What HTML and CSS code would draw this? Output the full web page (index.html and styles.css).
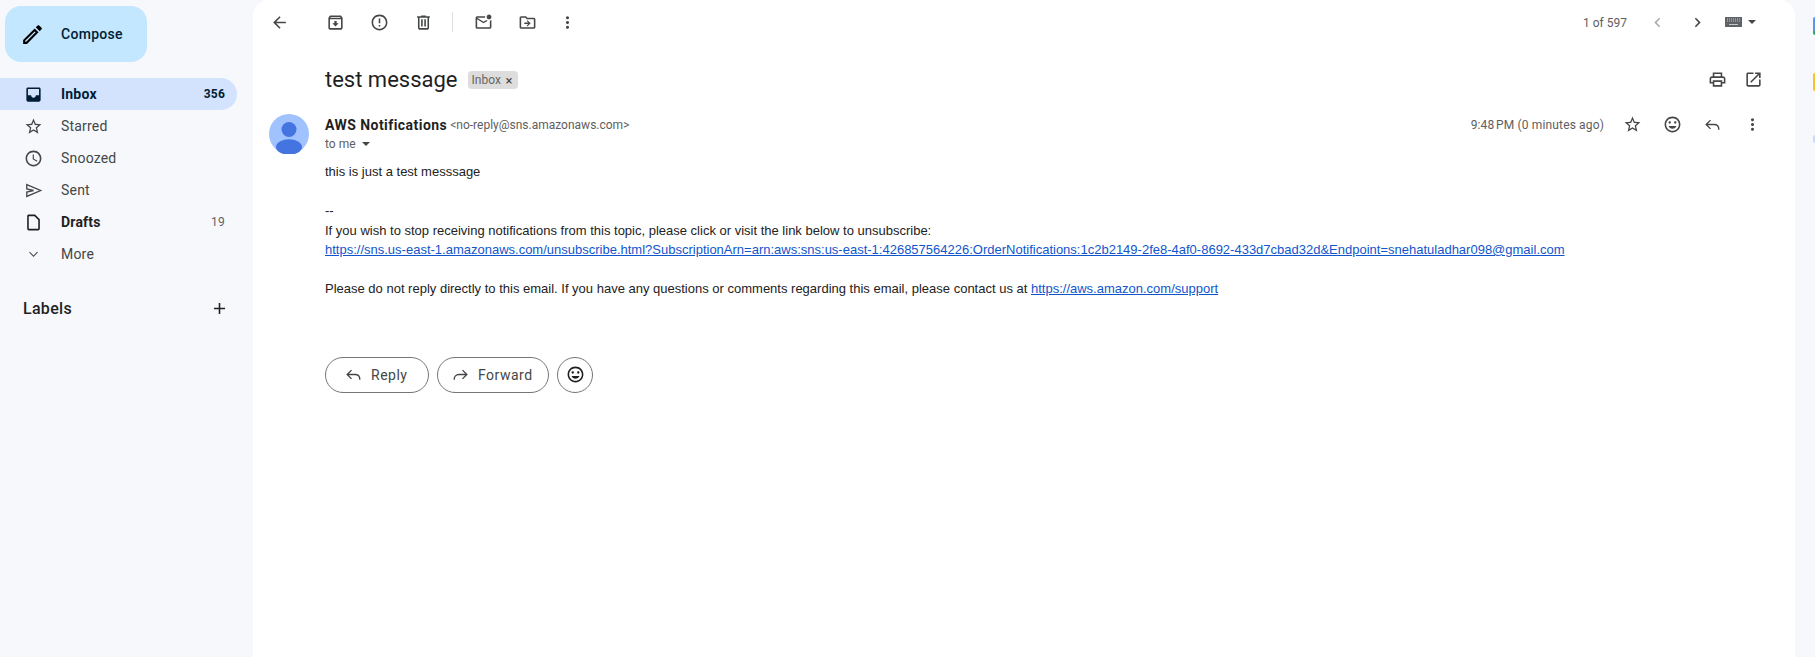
FILE: index.html
```html
<!DOCTYPE html>
<html lang="en">
  <head>
    <meta charset="UTF-8" />
    <title>test message - Gmail</title>
    <link rel="stylesheet" href="styles.css">
  </head>
  <body>
    <svg class="sprite" xmlns="http://www.w3.org/2000/svg">
      <symbol id="i-pencil" viewBox="0 0 24 24"><path d="M14.06 9.02l.92.92L5.92 19H5v-.92l9.06-9.06M17.66 3c-.25 0-.51.1-.7.29l-1.83 1.83 3.75 3.75 1.83-1.83c.39-.39.39-1.02 0-1.41l-2.34-2.34c-.2-.2-.45-.29-.71-.29zm-3.6 3.19L3 17.25V21h3.75L17.81 9.94l-3.75-3.75z"/></symbol>
      <symbol id="i-inbox" viewBox="0 0 24 24"><path fill-rule="evenodd" d="M5 3h14c1.1 0 2 .9 2 2v14c0 1.100-.9 2-2 2H5c-1.100 0-2-.9-2-2V5c0-1.100.9-2 2-2zm0 10h4c0 1.660 1.340 3 3 3s3-1.340 3-3h4V5H5v8z"/></symbol>
      <symbol id="i-star" viewBox="0 0 24 24"><path d="M22 9.24l-7.190-.62L12 2 9.190 8.630 2 9.240l5.460 4.730L5.820 21 12 17.270 18.180 21l-1.630-7.030L22 9.240zM12 15.400l-3.760 2.270 1-4.280-3.320-2.880 4.380-.38L12 6.100l1.710 4.040 4.380.38-3.320 2.880 1 4.280L12 15.400z"/></symbol>
      <symbol id="i-clock" viewBox="0 0 24 24"><path d="M11.990 2C6.470 2 2 6.480 2 12s4.470 10 9.990 10C17.520 22 22 17.520 22 12S17.520 2 11.990 2zM12 20c-4.420 0-8-3.580-8-8s3.580-8 8-8 8 3.580 8 8-3.580 8-8 8zm.5-13H11v6l5.250 3.150.75-1.230-4.500-2.670z"/></symbol>
      <symbol id="i-send" viewBox="0 0 24 24"><path d="M3.500 4.500L21 12 3.500 19.500V14l8.500-2-8.500-2z" fill="none" stroke="currentColor" stroke-width="1.700"/></symbol>
      <symbol id="i-draft" viewBox="0 0 24 24"><path d="M14 2H6c-1.100 0-2 .9-2 2v16c0 1.100.9 2 2 2h12c1.100 0 2-.9 2-2V8l-6-6zm4 18H6V4h7.170L18 8.830V20z"/></symbol>
      <symbol id="i-down" viewBox="0 0 24 24"><path d="M16.590 8.590L12 13.170 7.410 8.590 6.500 9.500l5.500 5.500 5.500-5.500z"/></symbol>
      <symbol id="i-plus" viewBox="0 0 24 24"><path d="M19 13h-6v6h-2v-6H5v-2h6V5h2v6h6v2z"/></symbol>
      <symbol id="i-back" viewBox="0 0 24 24"><path d="M20 11H7.830l5.590-5.590L12 4l-8 8 8 8 1.410-1.410L7.830 13H20v-2z"/></symbol>
      <symbol id="i-archive" viewBox="0 0 24 24"><path d="M20.540 5.230l-1.390-1.680C18.880 3.210 18.470 3 18 3H6c-.47 0-.88.21-1.160.55L3.460 5.230C3.170 5.570 3 6.020 3 6.500V19c0 1.100.9 2 2 2h14c1.100 0 2-.9 2-2V6.500c0-.48-.17-.93-.46-1.270zM6.240 5h11.520l.83 1H5.420l.82-1zM5 19V8h14v11H5zm8.450-9h-2.900v3H8l4 4 4-4h-2.550z"/></symbol>
      <symbol id="i-report" viewBox="0 0 24 24"><path d="M12 2C6.480 2 2 6.480 2 12s4.480 10 10 10 10-4.480 10-10S17.520 2 12 2zm0 18c-4.410 0-8-3.590-8-8s3.590-8 8-8 8 3.590 8 8-3.590 8-8 8zm-1-5h2v2h-2zm0-8h2v6h-2z"/></symbol>
      <symbol id="i-trash" viewBox="0 0 24 24"><path d="M15 4V3H9v1H4v2h1v13c0 1.100.9 2 2 2h10c1.100 0 2-.9 2-2V6h1V4h-5zm2 15H7V6h10v13zM9 8h2v9H9zm4 0h2v9h-2z"/></symbol>
      <symbol id="i-unread" viewBox="0 0 24 24"><path d="M22 8.980V18c0 1.100-.9 2-2 2H4c-1.100 0-2-.9-2-2V6c0-1.100.9-2 2-2h10.100c-.06.32-.1.66-.1 1s.04.68.1 1H4l8 5 3.670-2.290c.47.43 1.020.76 1.630.98L12 13 4 8v10h16V9.900c.74-.15 1.420-.48 2-.92zM16 5c0 1.660 1.340 3 3 3s3-1.340 3-3-1.340-3-3-3-3 1.340-3 3z"/></symbol>
      <symbol id="i-move" viewBox="0 0 24 24"><path d="M20 6h-8l-2-2H4c-1.100 0-2 .9-2 2v12c0 1.100.9 2 2 2h16c1.100 0 2-.9 2-2V8c0-1.100-.9-2-2-2zm0 12H4V6h5.170l2 2H20v10zm-8-1l4-4-4-4-1.060 1.060L13.130 12H8v2h5.130l-2.190 1.940z"/></symbol>
      <symbol id="i-more" viewBox="0 0 24 24"><path d="M12 8c1.100 0 2-.9 2-2s-.9-2-2-2-2 .9-2 2 .9 2 2 2zm0 2c-1.100 0-2 .9-2 2s.9 2 2 2 2-.9 2-2-.9-2-2-2zm0 6c-1.100 0-2 .9-2 2s.9 2 2 2 2-.9 2-2-.9-2-2-2z"/></symbol>
      <symbol id="i-left" viewBox="0 0 24 24"><path d="M15.410 7.410L14 6l-6 6 6 6 1.410-1.410L10.830 12z"/></symbol>
      <symbol id="i-right" viewBox="0 0 24 24"><path d="M10 6L8.590 7.410 13.170 12l-4.580 4.590L10 18l6-6z"/></symbol>
      <symbol id="i-print" viewBox="0 0 24 24"><path d="M19 8h-1V3H6v5H5c-1.660 0-3 1.340-3 3v6h4v4h12v-4h4v-6c0-1.660-1.340-3-3-3zM8 5h8v3H8V5zm8 14H8v-4h8v4zm4-4h-2v-2H6v2H4v-4c0-.55.45-1 1-1h14c.55 0 1 .45 1 1v4z"/></symbol>
      <symbol id="i-open" viewBox="0 0 24 24"><path d="M19 19H5V5h7V3H5c-1.110 0-2 .9-2 2v14c0 1.100.89 2 2 2h14c1.100 0 2-.9 2-2v-7h-2v7zM14 3v2h3.590l-9.830 9.830 1.410 1.410L19 6.410V10h2V3h-7z"/></symbol>
      <symbol id="i-smile" viewBox="0 0 24 24"><path d="M11.990 2C6.470 2 2 6.480 2 12s4.470 10 9.990 10C17.520 22 22 17.520 22 12S17.520 2 11.990 2zM12 20c-4.420 0-8-3.580-8-8s3.580-8 8-8 8 3.580 8 8-3.580 8-8 8zm3.500-9c.83 0 1.500-.67 1.500-1.500S16.330 8 15.500 8 14 8.670 14 9.500s.67 1.500 1.500 1.500zm-7 0c.83 0 1.500-.67 1.500-1.500S9.330 8 8.500 8 7 8.670 7 9.500 7.670 11 8.500 11zm3.500 6.500c2.330 0 4.310-1.460 5.110-3.500H6.890c.8 2.040 2.780 3.500 5.110 3.500z"/></symbol>
      <symbol id="i-reply" viewBox="0 0 24 24"><path d="M9.500 6.500L4 12l5.500 5.500M4.500 12H14c3.500 0 6 2.500 6 6.500" fill="none" stroke="currentColor" stroke-width="1.700"/></symbol>
      <symbol id="i-forward" viewBox="0 0 24 24"><path d="M14.500 6.500L20 12l-5.500 5.500M19.500 12H10c-3.500 0-6 2.500-6 6.500" fill="none" stroke="currentColor" stroke-width="1.700"/></symbol>
    </svg>

    <div class="app">
      <nav class="sidebar">
        <button class="compose">
          <svg class="icon compose-icon"><use href="#i-pencil"/></svg>
          Compose
        </button>
        <ul class="nav-list">
          <li class="nav-item active">
            <svg class="icon"><use href="#i-inbox"/></svg>
            <span class="nav-label">Inbox</span>
            <span class="nav-count">356</span>
          </li>
          <li class="nav-item">
            <svg class="icon"><use href="#i-star"/></svg>
            <span class="nav-label">Starred</span>
          </li>
          <li class="nav-item">
            <svg class="icon"><use href="#i-clock"/></svg>
            <span class="nav-label">Snoozed</span>
          </li>
          <li class="nav-item">
            <svg class="icon"><use href="#i-send"/></svg>
            <span class="nav-label">Sent</span>
          </li>
          <li class="nav-item bold">
            <svg class="icon"><use href="#i-draft"/></svg>
            <span class="nav-label">Drafts</span>
            <span class="nav-count light">19</span>
          </li>
          <li class="nav-item">
            <svg class="icon"><use href="#i-down"/></svg>
            <span class="nav-label">More</span>
          </li>
        </ul>
        <div class="labels">
          <span>Labels</span>
          <svg class="icon"><use href="#i-plus"/></svg>
        </div>
      </nav>

      <main class="card">
        <div class="toolbar">
          <span class="tool tool-back"><svg class="icon"><use href="#i-back"/></svg></span>
          <span class="tool"><svg class="icon"><use href="#i-archive"/></svg></span>
          <span class="tool"><svg class="icon"><use href="#i-report"/></svg></span>
          <span class="tool"><svg class="icon"><use href="#i-trash"/></svg></span>
          <span class="divider"></span>
          <span class="tool"><svg class="icon"><use href="#i-unread"/></svg></span>
          <span class="tool"><svg class="icon"><use href="#i-move"/></svg></span>
          <span class="tool tool-narrow"><svg class="icon"><use href="#i-more"/></svg></span>
          <div class="pager">
            <span class="pager-text">1 of 597</span>
            <span class="tool"><svg class="icon faded"><use href="#i-left"/></svg></span>
            <span class="tool tool-narrow"><svg class="icon"><use href="#i-right"/></svg></span>
            <svg class="keyboard" viewBox="0 0 17 10">
              <rect width="17" height="10" fill="#5f6368"/>
              <path d="M2 2h13M2 4h13" stroke="#c4c7c5" stroke-width="1" stroke-dasharray="1 1"/>
              <rect x="4" y="7" width="9" height="1" fill="#c4c7c5"/>
            </svg>
            <span class="caret"></span>
          </div>
        </div>

        <div class="subject-row">
          <h2 class="subject">test message</h2>
          <span class="chip">Inbox <span class="chip-x">×</span></span>
          <div class="subject-tools">
            <span class="tool tool-small"><svg class="icon"><use href="#i-print"/></svg></span>
            <span class="tool tool-small"><svg class="icon"><use href="#i-open"/></svg></span>
          </div>
        </div>

        <div class="message">
          <svg class="avatar" viewBox="0 0 40 40">
            <circle cx="20" cy="20" r="20" fill="#a0c3ff"/>
            <circle cx="20" cy="15.500" r="7.500" fill="#4374e0"/>
            <ellipse cx="20" cy="33" rx="13" ry="7.800" fill="#4374e0"/>
          </svg>
          <div class="message-main">
            <div class="message-head">
              <span class="sender">AWS Notifications</span>
              <span class="address">&lt;no-reply@sns.amazonaws.com&gt;</span>
              <span class="time">9:48&#8239;PM (0 minutes ago)</span>
              <span class="tool tool-head"><svg class="icon"><use href="#i-star"/></svg></span>
              <span class="tool tool-head"><svg class="icon"><use href="#i-smile"/></svg></span>
              <span class="tool tool-head"><svg class="icon"><use href="#i-reply"/></svg></span>
              <span class="tool tool-head"><svg class="icon"><use href="#i-more"/></svg></span>
            </div>
            <div class="to-me">to me <span class="caret"></span></div>
            <div class="body-text">
              this is just a test messsage<br />
              <br />
              --<br />
              If you wish to stop receiving notifications from this topic, please click or visit the link below to unsubscribe:<br />
              <a href="#">https://sns.us-east-1.amazonaws.com/unsubscribe.html?SubscriptionArn=arn:aws:sns:us-east-1:426857564226:OrderNotifications:1c2b2149-2fe8-4af0-8692-433d7cbad32d&amp;Endpoint=snehatuladhar098@gmail.com</a><br />
              <br />
              Please do not reply directly to this email. If you have any questions or comments regarding this email, please contact us at <a href="#">https://aws.amazon.com/support</a>
            </div>
            <div class="actions">
              <button class="pill pill-reply"><svg class="icon"><use href="#i-reply"/></svg>Reply</button>
              <button class="pill pill-forward"><svg class="icon"><use href="#i-forward"/></svg>Forward</button>
              <button class="pill pill-emoji"><svg class="icon"><use href="#i-smile"/></svg></button>
            </div>
          </div>
        </div>
      </main>

      <aside class="rail">
        <span class="rail-mark blue"></span>
        <span class="rail-mark yellow"></span>
        <span class="rail-mark pale"></span>
      </aside>
    </div>
  </body>
</html>
```

FILE: styles.css
```css
html {
  font-family: Roboto, "Noto Sans", sans-serif;
}

body {
  margin: 0;
  height: 657px;
  overflow: hidden;
  background-color: #f6f8fc;
  color: #444746;
}

.sprite {
  display: none;
}

.app {
  display: flex;
  height: 657px;
}

.icon {
  width: 19px;
  height: 19px;
  fill: currentColor;
  flex: none;
}

/* left column */
.sidebar {
  width: 253px;
  flex: none;
}

.compose {
  display: flex;
  align-items: center;
  width: 142px;
  height: 56px;
  margin: 6px 0 16px 5px;
  padding: 0 0 0 15px;
  border: none;
  border-radius: 16px;
  background-color: #c2e7ff;
  color: #001d35;
  font-family: inherit;
  font-size: 14px;
  font-weight: 500;
  letter-spacing: 0.3px;
}

.compose-icon {
  width: 25px;
  height: 25px;
  margin-right: 16px;
  color: #000;
}

.nav-list {
  list-style: none;
  margin: 0;
  padding: 0;
}

.nav-item {
  display: flex;
  align-items: center;
  width: 237px;
  height: 32px;
  padding: 0 12px 0 24px;
  box-sizing: border-box;
  border-radius: 0 16px 16px 0;
  font-size: 14px;
  letter-spacing: 0.2px;
  color: #444746;
}

.nav-item .icon {
  margin-right: 18px;
}

.nav-item.active {
  background-color: #d3e3fd;
  color: #001d35;
  font-weight: 700;
}

.nav-item.bold {
  color: #1f1f1f;
  font-weight: 700;
}

.nav-label {
  flex: 1;
}

.nav-count {
  font-size: 12px;
}

.nav-count.light {
  font-weight: 400;
  color: #5f6368;
}

.labels {
  display: flex;
  align-items: center;
  justify-content: space-between;
  width: 206px;
  margin: 22px 0 0 23px;
  height: 32px;
  font-size: 16px;
  font-weight: 500;
  letter-spacing: 0.3px;
  color: #1f1f1f;
}

/* message card */
.card {
  flex: 1;
  background-color: #fff;
  border-radius: 16px 16px 0 0;
}

.toolbar {
  display: flex;
  align-items: center;
  height: 44px;
  padding-left: 6px;
  color: #444746;
}

.tool {
  display: flex;
  align-items: center;
  justify-content: center;
  width: 44px;
  height: 44px;
  flex: none;
}

.tool-back {
  width: 40px;
  margin-right: 14px;
}

.tool-narrow {
  width: 36px;
}

.divider {
  width: 1px;
  height: 20px;
  margin: 0 8px 0 7px;
  background-color: #e0e0e0;
}

.pager {
  display: flex;
  align-items: center;
  margin-left: auto;
  padding-right: 39px;
}

.pager-text {
  padding-top: 2px;
  font-size: 12px;
  color: #5e5e5e;
  margin-right: 8px;
}

.faded {
  opacity: 0.45;
}

.keyboard {
  width: 17px;
  height: 10px;
  margin: 0 6px 0 10px;
}

.caret {
  display: inline-block;
  width: 0;
  height: 0;
  border-left: 4px solid transparent;
  border-right: 4px solid transparent;
  border-top: 4px solid #444746;
}

.subject-row {
  display: flex;
  align-items: center;
  height: 48px;
  margin: 11px 0 11px;
  padding: 0 24px 0 72px;
}

.subject {
  margin: 0;
  font-size: 22px;
  font-weight: 400;
  color: #1f1f1f;
}

.chip {
  display: flex;
  justify-content: space-between;
  width: 50px;
  box-sizing: border-box;
  margin: 2px 0 0 10px;
  padding: 0 5px 0 4px;
  height: 18px;
  line-height: 18px;
  border-radius: 4px;
  background-color: #ddd;
  color: #666;
  font-size: 12px;
}

.chip-x {
  color: #444;
  font-size: 13px;
  padding-top: 1px;
}

.subject-tools {
  display: flex;
  margin-left: auto;
}

.tool-small {
  width: 36px;
}

.message {
  display: flex;
  padding-left: 16px;
}

.avatar {
  width: 40px;
  height: 40px;
  flex: none;
  margin-right: 16px;
}

.message-main {
  flex: 1;
}

.message-head {
  display: flex;
  align-items: center;
  height: 20px;
  padding-right: 23px;
}

.sender {
  padding-top: 2px;
  font-size: 14px;
  font-weight: 700;
  letter-spacing: 0.45px;
  color: #1f1f1f;
  margin-right: 3px;
}

.address {
  padding-top: 2px;
  font-size: 12px;
  color: #5e5e5e;
}

.time {
  padding-top: 2px;
  margin-left: auto;
  margin-right: 8px;
  font-size: 12px;
  letter-spacing: 0.15px;
  color: #5e5e5e;
}

.tool-head {
  width: 40px;
  height: 20px;
}

.to-me {
  display: flex;
  align-items: center;
  gap: 6px;
  height: 20px;
  font-size: 12px;
  color: #5e5e5e;
}

.body-text {
  margin-top: 8px;
  font-family: "Liberation Sans", Arial, sans-serif;
  font-size: 13px;
  line-height: 19.5px;
  color: #222;
}

.body-text a {
  color: #1155cc;
}

.actions {
  display: flex;
  gap: 8px;
  margin-top: 58px;
}

.pill {
  display: flex;
  align-items: center;
  height: 36px;
  padding: 0;
  border: 1px solid #747775;
  border-radius: 18px;
  background-color: #fff;
  color: #444746;
  font-family: inherit;
  font-size: 14px;
  font-weight: 400;
  letter-spacing: 0.5px;
}

.pill .icon {
  margin-right: 8px;
}

.pill-reply {
  width: 104px;
  padding-left: 18px;
}

.pill-forward {
  width: 112px;
  padding-left: 13px;
}

.pill-emoji {
  width: 36px;
  justify-content: center;
  color: #1f1f1f;
}

.pill-emoji .icon {
  margin-right: 0;
}

/* right edge */
.rail {
  width: 20px;
  flex: none;
  display: flex;
  flex-direction: column;
  align-items: flex-end;
}

.rail-mark {
  width: 2px;
  border-radius: 2px 0 0 2px;
}

.rail-mark.blue {
  height: 18px;
  margin-top: 17px;
  background: linear-gradient(#5a95f5 80%, #34a853 80%);
}

.rail-mark.yellow {
  height: 18px;
  margin-top: 38px;
  background-color: #fbc02d;
}

.rail-mark.pale {
  height: 8px;
  margin-top: 44px;
  background-color: #c8dcfb;
}
```
